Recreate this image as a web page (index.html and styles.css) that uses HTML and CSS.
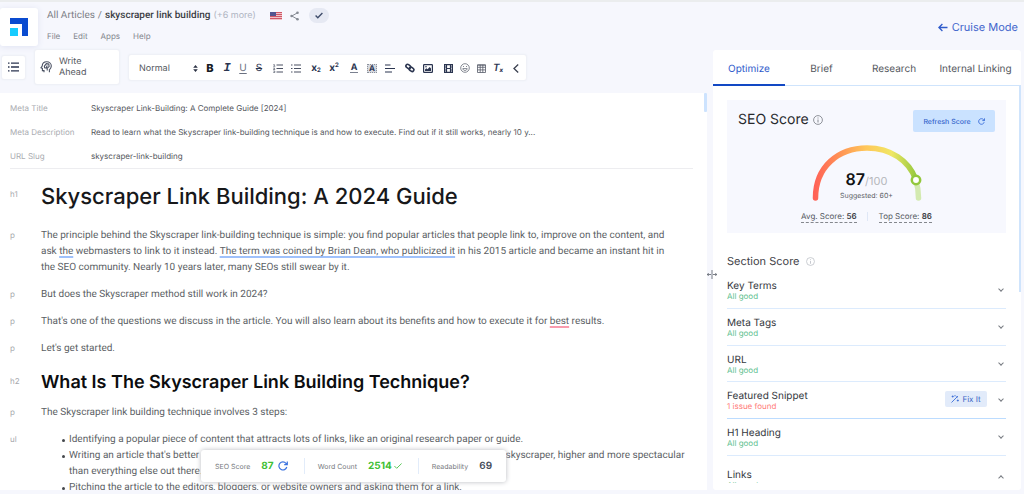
FILE: index.html
```html
<!DOCTYPE html>
<html lang="en">
<head>
<meta charset="utf-8">
<meta name="viewport" content="width=device-width, initial-scale=1">
<title>skyscraper link building</title>
<link rel="stylesheet" href="styles.css">
</head>
<body>
<div class="app">
  <main class="workspace">
    <header class="header">
      <a class="logo" href="#" aria-label="Home">
        <svg width="18" height="18" viewBox="0 0 18 18"><path d="M0 0h18v18h-6V6H0z" fill="#0a4bd0"/><path d="M0 10h8v8H0z" fill="#17ccff"/></svg>
      </a>
      <div class="header-text">
        <div class="crumbs">
          <a class="crumb-root" href="#">All Articles</a>
          <span class="crumb-root">/</span>
          <span class="crumb-title">skyscraper link building</span>
          <span class="crumb-more">(+6 more)</span>
          <svg class="flag" width="12" height="8" viewBox="0 0 12 8"><path fill="#f0c3c8" d="M0 0h12v8H0z"/><path d="M0 .5h12M0 2.5h12M0 4.5h12M0 6.5h12" stroke="#cf5766"/><path fill="#53558f" d="M0 0h6v4H0z"/></svg>
          <button class="icon-btn share" aria-label="Share">
            <svg width="9" height="10" viewBox="0 0 9 10" fill="none" stroke="#858a93"><path d="M7.5 1.8 1.8 5l5.7 3.2"/><g fill="#858a93" stroke="none"><circle cx="7.5" cy="1.7" r="1.3"/><circle cx="1.6" cy="5" r="1.3"/><circle cx="7.5" cy="8.3" r="1.3"/></g></svg>
          </button>
          <button class="icon-btn saved" aria-label="Saved">
            <svg width="8" height="7" viewBox="0 0 8 7" fill="none" stroke="#3f4d6b" stroke-width="1.4"><path d="m.6 3.6 2.2 2.2L7.4 1"/></svg>
          </button>
        </div>
        <nav class="menu">
          <a href="#">File</a><a href="#">Edit</a><a href="#">Apps</a><a href="#">Help</a>
        </nav>
      </div>
    </header>

    <div class="toolbar">
      <button class="card outline-btn" aria-label="Outline">
        <svg width="11" height="10" viewBox="0 0 11 10" stroke="#2b3550" stroke-width="1.3"><path d="M0 1.2h1.5M3 1.2h8M0 5h1.5M3 5h8M0 8.8h1.5M3 8.8h8"/></svg>
      </button>
      <button class="card write-btn">
        <svg width="12" height="12" viewBox="0 0 12 12" fill="none" stroke="#4a5163" stroke-width="1.1"><path d="M4 11.3V9.6H2.4V7.4L1 6.7 2.2 5C2.3 2.4 4.200.8 6.700.8c2.700 0 4.600 1.900 4.600 4.300 0 1.800-.9 2.800-1.900 3.700v2.500"/><path d="M4.400 5.200 6.300 2.700 8.800 3l.3 2.600-2 1.500-2.500-.4zM6 6.900 7.300 4.400M7.200 7.100v2.500"/></svg>
        <span>Write Ahead</span>
      </button>
      <div class="card format-bar">
        <label class="style-picker">
          <select aria-label="Text style"><option>Normal</option><option>Heading 1</option><option>Heading 2</option></select>
          <svg width="5" height="7" viewBox="0 0 5 7" fill="#2b3244"><path d="M.2 2.800 2.500 0l2.300 2.800zM.2 4.200 2.500 7l2.300-2.800z"/></svg>
        </label>
        <button class="tool bold" aria-label="Bold">B</button>
        <button class="tool italic" aria-label="Italic">I</button>
        <button class="tool under" aria-label="Underline">U</button>
        <button class="tool strike" aria-label="Strikethrough">S</button>
        <button class="tool spaced" aria-label="Numbered list"><svg width="10" height="9" viewBox="0 0 10 9" stroke="#4a5163" fill="none"><path d="M3.500 1h6.500M3.500 4.500h6.500M3.500 8h6.500" stroke-width="1.200"/><path d="M.5.500h.8V2M.3 2.300h2M.3 4h1.400L.5 5.500h1.700M.3 7h1.500v1.500H.3" stroke-width=".7"/></svg></button>
        <button class="tool" aria-label="Bulleted list"><svg width="10" height="9" viewBox="0 0 10 9" stroke="#4a5163" stroke-width="1.200"><path d="M0 1h1.500M3 1h7M0 4.500h1.500M3 4.500h7M0 8h1.500M3 8h7"/></svg></button>
        <button class="tool script spaced" aria-label="Subscript">x<sub>2</sub></button>
        <button class="tool script" aria-label="Superscript">x<sup>2</sup></button>
        <button class="tool colour spaced" aria-label="Text colour"><span>A</span></button>
        <button class="tool shade" aria-label="Highlight"><span>A</span></button>
        <button class="tool" aria-label="Align"><svg width="10" height="9" viewBox="0 0 10 9" stroke="#2b3550" stroke-width="1.200"><path d="M0 1h5.500M0 4.500h10M0 8h7"/></svg></button>
        <button class="tool spaced" aria-label="Link"><svg width="10" height="10" viewBox="0 0 10 10" fill="none" stroke="#2b3550" stroke-width="1.600"><rect x="-2.500" y="-1.700" width="5" height="3.400" rx="1.700" transform="translate(3.300 3.500) rotate(35)"/><rect x="-2.500" y="-1.700" width="5" height="3.400" rx="1.700" transform="translate(6.500 6.300) rotate(35)"/></svg></button>
        <button class="tool" aria-label="Image"><svg width="10" height="9" viewBox="0 0 10 9"><rect x=".6" y=".6" width="8.800" height="7.800" rx=".6" fill="none" stroke="#2b3550" stroke-width="1.200"/><path d="M2 7V5.500L3.300 4.300l1.200 1L6.700 3 8 4.500V7z" fill="#2b3550"/><circle cx="3" cy="2.700" r=".8" fill="#2b3550"/></svg></button>
        <button class="tool spaced" aria-label="Video"><svg width="9" height="9" viewBox="0 0 9 9" fill="none" stroke="#2b3550"><path d="M.6.600h7.800v7.800H.6zM2.500.600v7.800M6.500.600v7.800M2.500 4.500h4" stroke-width="1.200"/><path d="M.6 3h1.900M.6 6h1.900M6.500 3h1.900M6.500 6h1.900" stroke-width=".8"/></svg></button>
        <button class="tool narrow" aria-label="Emoji"><svg width="10" height="10" viewBox="0 0 10 10" fill="none" stroke="#666b76" stroke-width=".8"><circle cx="5" cy="5" r="4.300"/><path d="M2.800 5.600c.3 1.300 1.100 1.900 2.200 1.900s1.900-.6 2.200-1.900zM3.500 3v1M6.500 3v1"/></svg></button>
        <button class="tool narrow" aria-label="Table"><svg width="9" height="9" viewBox="0 0 9 9" fill="none" stroke="#555b68" stroke-width=".8"><path d="M.5.800h8v7.700h-8zM.5 3.300h8M.5 5.900h8M3.200.800v7.700M5.800.800v7.700M.5 1.200h8"/></svg></button>
        <button class="tool clear" aria-label="Clear formatting">T<sub>x</sub></button>
        <button class="tool" aria-label="Collapse"><svg width="6" height="9" viewBox="0 0 6 9" fill="none" stroke="#3b4150" stroke-width="1.300"><path d="M5.200.6 1 4.500l4.200 3.900"/></svg></button>
      </div>
    </div>

    <section class="editor">
      <div class="editor-scroll">
        <dl class="meta">
          <dt>Meta Title</dt><dd>Skyscraper Link-Building: A Complete Guide [2024]</dd>
          <dt>Meta Description</dt><dd>Read to learn what the Skyscraper link-building technique is and how to execute. Find out if it still works, nearly 10 y...</dd>
          <dt>URL Slug</dt><dd>skyscraper-link-building</dd>
        </dl>
        <article class="doc">
          <div class="block block-h1"><span class="tag">h1</span><h1>Skyscraper Link Building: A 2024 Guide</h1></div>
          <div class="block"><span class="tag">p</span><p>The principle behind the Skyscraper link-building technique is simple: you find popular articles that people link to, improve on the content, and ask <span class="hint">the</span> webmasters to link to it instead. <span class="hint">The term was coined by Brian Dean, who publicized it</span> in his 2015 article and became an instant hit in the SEO community. Nearly 10 years later, many SEOs still swear by it.</p></div>
          <div class="block"><span class="tag">p</span><p>But does the Skyscraper method still work in 2024?</p></div>
          <div class="block"><span class="tag">p</span><p>That's one of the questions we discuss in the article. You will also learn about its benefits and how to execute it for <span class="hint error">best</span> results.</p></div>
          <div class="block"><span class="tag">p</span><p>Let's get started.</p></div>
          <div class="block block-h2"><span class="tag">h2</span><h2>What Is The Skyscraper Link Building Technique?</h2></div>
          <div class="block"><span class="tag">p</span><p>The Skyscraper link building technique involves 3 steps:</p></div>
          <div class="block"><span class="tag">ul</span>
            <ul>
              <li>Identifying a popular piece of content that attracts lots of links, like an original research paper or guide.</li>
              <li>Writing an article that's better than the original piece of content, making it stand out, just like a real skyscraper, higher and more spectacular than everything else out there.</li>
              <li>Pitching the article to the editors, bloggers, or website owners and asking them for a link.</li>
            </ul>
          </div>
        </article>
      </div>
      <span class="scroll-thumb"></span>
      <div class="stats">
        <div class="stat"><span>SEO Score</span><b class="good">87</b>
          <svg width="10" height="10" viewBox="0 0 10 10" fill="none" stroke="#3d74e0" stroke-width="1.200"><path d="M8.800 6A4 4 0 1 1 8 2.400L9 3.600M9.300.500v3.200H6.200"/></svg></div>
        <div class="stat"><span>Word Count</span><b class="good">2514</b>
          <svg class="tick" width="8" height="6" viewBox="0 0 8 6" fill="none" stroke="#5cc95a"><path d="m.4 3 2.300 2.300L7.600.5"/></svg></div>
        <div class="stat"><span>Readability</span><b>69</b></div>
      </div>
    </section>
  </main>

  <aside class="side">
    <a class="cruise" href="#">
      <svg width="10" height="9" viewBox="0 0 10 9" fill="none" stroke="#2f5bcb" stroke-width="1.300"><path d="M9.500 4.500H1M4.400 1 .9 4.500 4.400 8"/></svg>
      Cruise Mode
    </a>
    <div class="panel">
      <nav class="tabs">
        <button class="tab active">Optimize</button>
        <button class="tab">Brief</button>
        <button class="tab">Research</button>
        <button class="tab">Internal Linking</button>
      </nav>
      <div class="panel-scroll">
        <section class="score">
          <div class="score-head">
            <h3>SEO Score</h3>
            <svg class="info" width="10" height="10" viewBox="0 0 10 10" fill="none" stroke="#85888f"><circle cx="5" cy="5" r="4.400" stroke-width=".9"/><path d="M5 4.500v3M5 2.500v1"/></svg>
            <button class="refresh">Refresh Score
              <svg width="7" height="7" viewBox="0 0 10 10" fill="none" stroke="#3d6fd8" stroke-width="1.300"><path d="M8.800 6A4 4 0 1 1 8 2.400L9 3.600M9.300.500v3.200H6.200"/></svg>
            </button>
          </div>
          <div class="gauge">
            <svg width="116" height="60" viewBox="0 0 116 60" fill="none" stroke-width="5.500" stroke-linecap="round">
              <defs><linearGradient id="heat" gradientUnits="userSpaceOnUse" x1="6" y1="0" x2="108" y2="0"><stop offset="0" stop-color="#ff6257"/><stop offset=".25" stop-color="#ff9455"/><stop offset=".5" stop-color="#ffc75a"/><stop offset=".75" stop-color="#f0e765"/><stop offset="1" stop-color="#93c83d"/></linearGradient></defs>
              <path d="M106.500 36Q109.500 45 109.500 55" stroke="#d3eab0"/>
              <path d="M6.500 55C6.500 24 29 5 58 5c24 0 42 13 48.500 31" stroke="url(#heat)"/>
              <circle cx="107" cy="37" r="4.200" fill="#fff" stroke="#93c83d" stroke-width="2.500"/>
            </svg>
            <div class="gauge-text"><div><b>87</b><span>/100</span></div><small>Suggested: 60+</small></div>
          </div>
          <div class="score-foot"><a href="#">Avg. Score: <b>56</b></a><a href="#">Top Score: <b>86</b></a></div>
        </section>

        <h3 class="section-title">Section Score
          <svg width="9" height="9" viewBox="0 0 10 10" fill="none" stroke="#bfc2c8"><circle cx="5" cy="5" r="4.400" stroke-width=".9"/><path d="M5 4.500v3M5 2.500v1"/></svg>
        </h3>
        <ul class="checks">
          <li><div><h4>Key Terms</h4><p>All good</p></div><button class="chev" aria-label="Expand Key Terms"></button></li>
          <li><div><h4>Meta Tags</h4><p>All good</p></div><button class="chev" aria-label="Expand Meta Tags"></button></li>
          <li><div><h4>URL</h4><p>All good</p></div><button class="chev" aria-label="Expand URL"></button></li>
          <li class="flagged"><div><h4>Featured Snippet</h4><p class="bad">1 issue found</p></div>
            <button class="fix"><svg width="8" height="8" viewBox="0 0 8 8" fill="none" stroke="#3d6fd8" stroke-width=".9"><path d="M.5 7.500 7 1M5.300 1.500l1.200 1.200M1.700.500v2M.7 1.500h2M4 0v1.400M6.800 4.500v2M5.800 5.500h2"/></svg>Fix It</button>
            <button class="chev" aria-label="Expand Featured Snippet"></button></li>
          <li><div><h4>H1 Heading</h4><p>All good</p></div><button class="chev" aria-label="Expand H1 Heading"></button></li>
          <li class="last"><div><h4>Links</h4><p>All good</p></div><button class="chev up" aria-label="Collapse Links"></button></li>
        </ul>
      </div>
      <span class="panel-thumb"></span>
    </div>
    <span class="resizer"><svg width="10" height="9" viewBox="0 0 10 9" fill="none" stroke="#6c7079" stroke-width=".9"><path d="M5 0v9M0 4.500h4M6 4.500h4M1.700 3 .3 4.500 1.700 6M8.300 3l1.400 1.500L8.300 6"/></svg></span>
  </aside>
</div>
</body>
</html>
```
FILE: styles.css
```css
* { box-sizing: border-box; margin: 0; padding: 0; }
body { font-family: Inter, "Liberation Sans", sans-serif; text-rendering: geometricPrecision; color: #55585e; background: #f6f7fd; }
button, select { font: inherit; color: inherit; background: none; border: 0; text-rendering: inherit; }
a { color: inherit; text-decoration: none; }
ul { list-style: none; }
svg { display: block; flex: none; }

.app {
  display: grid;
  grid-template-columns: minmax(0, 1fr) 308px;
  gap: 6px;
  height: 100vh;
  padding: 0 3px 4px 0;
  border-top: 2px solid #ebedee;
  overflow: hidden;
}
.workspace { display: flex; flex-direction: column; min-width: 0; min-height: 0; }

/* header */
.header { display: flex; gap: 9px; height: 46px; padding-top: 6px; }
.logo { display: flex; align-items: center; justify-content: center; width: 38px; height: 38px; background: #fff; border-radius: 3px; box-shadow: 0 1px 6px #dfe3f2; }
.crumbs { display: flex; align-items: center; gap: 3px; height: 15px; font-size: 10px; }
.crumb-root, .crumb-title { font-family: Roboto, Inter, sans-serif; }
.crumb-root { color: #7b7e85; }
.crumb-title { color: #3a3d44; font-weight: 500; }
.crumb-more { color: #b0b5c2; font-size: 9px; }
.flag { margin-left: 11px; }
.icon-btn { display: flex; align-items: center; justify-content: center; }
.share { margin-left: 5px; }
.saved { width: 20px; height: 15px; margin-left: 7px; border-radius: 8px; background: #e6e9f3; }
.menu { display: flex; gap: 13px; margin-top: 7px; font-size: 8px; line-height: 12px; color: #83868d; }

/* toolbar */
.toolbar { display: flex; align-items: center; gap: 8px; height: 38px; padding-left: 1px; margin-bottom: 7px; flex: none; }
.card { background: #fff; border: 1px solid #eff1f7; border-radius: 3px; box-shadow: 0 0 2px #eceff6; }
.outline-btn { display: flex; align-items: center; justify-content: center; width: 25px; height: 25px; }
.write-btn { display: flex; align-items: center; gap: 7px; width: 86px; height: 36px; padding: 0 20px 0 5px; text-align: left; font-size: 9px; line-height: 11px; }
.format-bar { display: flex; align-items: center; height: 27px; padding: 2px 1px 0 10px; }
.style-picker { display: flex; align-items: center; width: 62px; }
.style-picker select { appearance: none; flex: 1; min-width: 0; font-size: 9px; }
.style-picker svg { margin-right: 3px; }
.tool { display: flex; align-items: center; justify-content: center; width: 18px; height: 20px; font-size: 10px; line-height: 12px; color: #2b3550; }
.spaced { margin-left: 2px; }
.bold { font-weight: 800; font-size: 11px; color: #151922; }
.italic { font-family: "Liberation Mono", monospace; font-size: 12px; font-style: italic; font-weight: 700; }
.under { text-decoration: underline; text-underline-offset: 2px; color: #6b7180; }
.strike { text-decoration: line-through; }
.narrow, .italic, .under, .strike { width: 16px; }
.script { font-weight: 700; }
.tool sub, .tool sup { font-size: 6px; line-height: 8px; }
.tool sub { padding-top: 6px; }
.tool sup { padding-bottom: 5px; }
.colour span { border-bottom: 1px solid #7b8190; font-weight: 700; font-size: 9px; line-height: 9px; padding: 0 1px; }
.shade span { font-weight: 700; font-size: 8px; line-height: 9px; padding: 0 2px; background: #d6d9df; outline: 1px dotted #8c919c; outline-offset: -1px; }
.clear { font-style: italic; font-weight: 600; }
.clear sub { font-weight: 800; }

/* editor */
.editor { position: relative; flex: 1; min-height: 0; background: #fff; }
.editor-scroll { height: 100%; overflow: hidden; padding: 3px 14px 0 10px; }
.meta { display: grid; grid-template-columns: 81px 1fr; font-size: 8px; line-height: 24px; border-bottom: 1px solid #ededf0; }
.meta dt { color: #aaacb1; }
.meta dd { color: #54575d; }
.doc { display: flex; flex-direction: column; gap: 11px; padding-top: 14px; font-size: 10px; line-height: 16px; color: #5c5f65; }
.doc p, .doc li { font-family: Roboto, Inter, sans-serif; }
.doc p { padding-right: 14px; }
.block { display: grid; grid-template-columns: 31px minmax(0, 1fr); }
.tag { font-size: 8px; line-height: 14px; color: #a6a8ad; }
.block-h1 { margin-bottom: 6px; }
h1 { font-size: 22px; line-height: 28px; font-weight: 500; color: #17181a; }
h2 { font-size: 18px; line-height: 18px; font-weight: 600; color: #0c0d0f; }
.block-h1 .tag { padding-top: 4px; }
.block-h2 { padding: 6px 0 2px; }
.hint { text-decoration: underline 2px #9fc1fb; text-underline-offset: 2px; text-decoration-skip-ink: none; }
.error { text-decoration-color: #f99cae; }
.block li { position: relative; margin-left: 28px; }
.block li::before { content: ""; position: absolute; left: -7px; top: 7px; width: 3px; height: 3px; border-radius: 50%; background: #44474c; }
.scroll-thumb { position: absolute; top: 0; right: 0; width: 3px; height: 19px; background: #cde3fe; border-radius: 1px; }

.stats { position: absolute; left: 201px; bottom: 8px; display: flex; align-items: center; height: 32px; padding: 0 14px; background: #fff; border-radius: 3px; box-shadow: 0 0 5px #b9bbc0; font-size: 7px; color: #777a80; }
.stat { display: flex; align-items: center; }
.stat + .stat { margin-left: 16px; padding-left: 13px; border-left: 1px solid #e2ecfa; height: 16px; }
.stat b { margin: 0 4px 0 11px; font-size: 10px; font-weight: 700; color: #454c5a; }
.stat:last-child b { margin-right: 0; font-weight: 600; }
.stat .good { color: #3fbf35; }
.stat .tick { margin-left: -2px; }

/* side panel */
.side { position: relative; display: flex; flex-direction: column; min-height: 0; }
.cruise { display: flex; align-items: center; justify-content: flex-end; gap: 4px; height: 48px; padding: 2px 3px 0 0; font-size: 11px; color: #3f65cc; flex: none; }
.panel { position: relative; display: flex; flex-direction: column; flex: 1; min-height: 0; background: #fff; border-radius: 3px; }
.tabs { display: grid; grid-template-columns: 72px 73px 72px 1fr; height: 36px; border-bottom: 1px solid #cfe4fc; flex: none; }
.tab { font-size: 10px; padding-top: 3px; }
.tab.active { color: #2f5bcb; border-bottom: 2px solid #1248c4; margin-bottom: -1px; }
.panel-scroll { flex: 1; min-height: 0; overflow: hidden; padding: 14px 15px 0 14px; margin-bottom: 7px; }
.panel-thumb { position: absolute; top: 35px; right: 0; width: 2px; height: 207px; background: #cfe4fc; }
.resizer { position: absolute; left: -6px; top: 268px; }

.score { display: flex; flex-direction: column; align-items: center; height: 133px; background: #f7f8fe; padding: 10px 11px 0; }
.score-head { display: flex; align-items: center; gap: 4px; align-self: stretch; height: 22px; }
.score-head h3 { font-size: 14px; font-weight: 400; color: #26282c; }
.score-head .info, .score-head h3 { margin-top: -3px; }
.refresh { display: flex; align-items: center; justify-content: center; gap: 7px; width: 82px; height: 22px; margin-left: auto; background: #cae2ff; border-radius: 2px; font-size: 7px; font-weight: 500; color: #3565cc; white-space: nowrap; }
.gauge { display: grid; margin-top: 11px; }
.gauge > * { grid-area: 1 / 1; }
.gauge-text { align-self: end; text-align: center; }
.gauge-text b { font-size: 16px; line-height: 17px; font-weight: 600; color: #111214; }
.gauge-text span { font-size: 11px; color: #b4b6ba; }
.gauge-text small { display: block; font-size: 7px; line-height: 14px; color: #5c5f66; }
.score-foot { display: flex; gap: 22px; margin-top: 8px; font-size: 8px; line-height: 11px; }
.score-foot a { border-bottom: 1px dashed #84878d; }
.score-foot b { color: #3d4046; font-weight: 600; }
.score-foot a + a { position: relative; }
.score-foot a + a::before { content: ""; position: absolute; left: -12px; top: 1px; width: 1px; height: 9px; background: #dfe7f6; }

.section-title { display: flex; align-items: center; gap: 6px; margin-top: 20px; font-size: 11px; line-height: 16px; font-weight: 400; color: #3f4248; }
.checks { margin-top: 3px; }
.checks li { display: flex; align-items: flex-start; height: 37px; border-bottom: 1px solid #dcebfd; padding-top: 9px; }
.checks li div { flex: 1; }
.checks li:nth-child(3) { height: 36px; }
.checks li.flagged { border-bottom-color: #bcdcff; }
.checks li.last { border: 0; padding-top: 14px; }
.checks h4 { font-size: 10px; line-height: 11px; font-weight: 400; color: #34373d; }
.checks p { font-size: 8px; line-height: 9px; color: #5fbf90; }
.checks .bad { color: #ff7b78; }
.chev { width: 11px; height: 16px; display: flex; align-items: center; justify-content: center; }
.chev::before { content: ""; width: 3px; height: 3px; border: solid #777b82; border-width: 0 1px 1px 0; transform: rotate(45deg); }
.chev.up::before { transform: rotate(225deg); }
.fix { display: flex; align-items: center; justify-content: center; gap: 3px; width: 42px; height: 16px; margin-right: 8px; background: #e2ebfa; border-radius: 2px; font-size: 8px; color: #3d66c6; }
```
